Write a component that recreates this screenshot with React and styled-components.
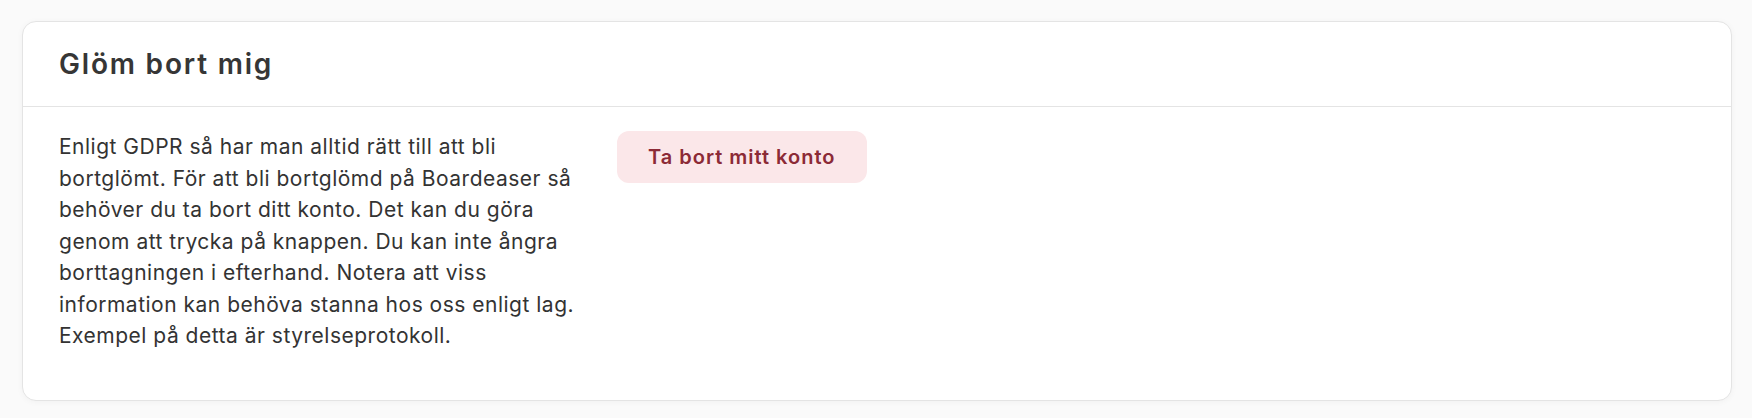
import React from 'react';
import styled, { createGlobalStyle } from 'styled-components';

const Global = createGlobalStyle`
  body {
    margin: 0;
    background: #fafafa;
    font-family: Inter, "Noto Sans", sans-serif;
    color: #333;
  }
`;

const Page = styled.div`
  padding: 21px 20px 18px 22px;
`;

const Card = styled.section`
  background: #fff;
  border: 1px solid #e4e4e4;
  border-radius: 14px;
  box-shadow: 0 1px 6px rgba(0, 0, 0, 0.04);
`;

const Header = styled.header`
  height: 84px;
  display: flex;
  align-items: center;
  padding: 0 36px;
  border-bottom: 1px solid #e4e4e4;
`;

const Title = styled.h2`
  margin: 0;
  font-size: 28px;
  font-weight: 600;
  letter-spacing: 1.8px;
  color: #363636;
`;

const Body = styled.div`
  display: grid;
  grid-template-columns: 528px auto;
  column-gap: 30px;
  align-items: start;
  padding: 24px 36px 48px;
`;

const Text = styled.p`
  margin: 0;
  font-size: 21px;
  line-height: 31.5px;
  letter-spacing: 0.5px;
  color: #333;
`;

const DangerButton = styled.button`
  justify-self: start;
  height: 52px;
  padding: 0 31px;
  border: none;
  border-radius: 12px;
  background: #fbe7e9;
  color: #8c2a36;
  font-family: inherit;
  font-size: 20px;
  font-weight: 600;
  letter-spacing: 1px;
  cursor: pointer;
`;

export default function App() {
  return (
    <Page>
      <Global />
      <Card>
        <Header>
          <Title>Glöm bort mig</Title>
        </Header>
        <Body>
          <Text>
            Enligt GDPR så har man alltid rätt till att bli bortglömt. För att bli
            bortglömd på Boardeaser så behöver du ta bort ditt konto. Det kan du
            göra genom att trycka på knappen. Du kan inte ångra borttagningen i
            efterhand. Notera att viss information kan behöva stanna hos oss
            enligt lag. Exempel på detta är styrelseprotokoll.
          </Text>
          <DangerButton>Ta bort mitt konto</DangerButton>
        </Body>
      </Card>
    </Page>
  );
}
